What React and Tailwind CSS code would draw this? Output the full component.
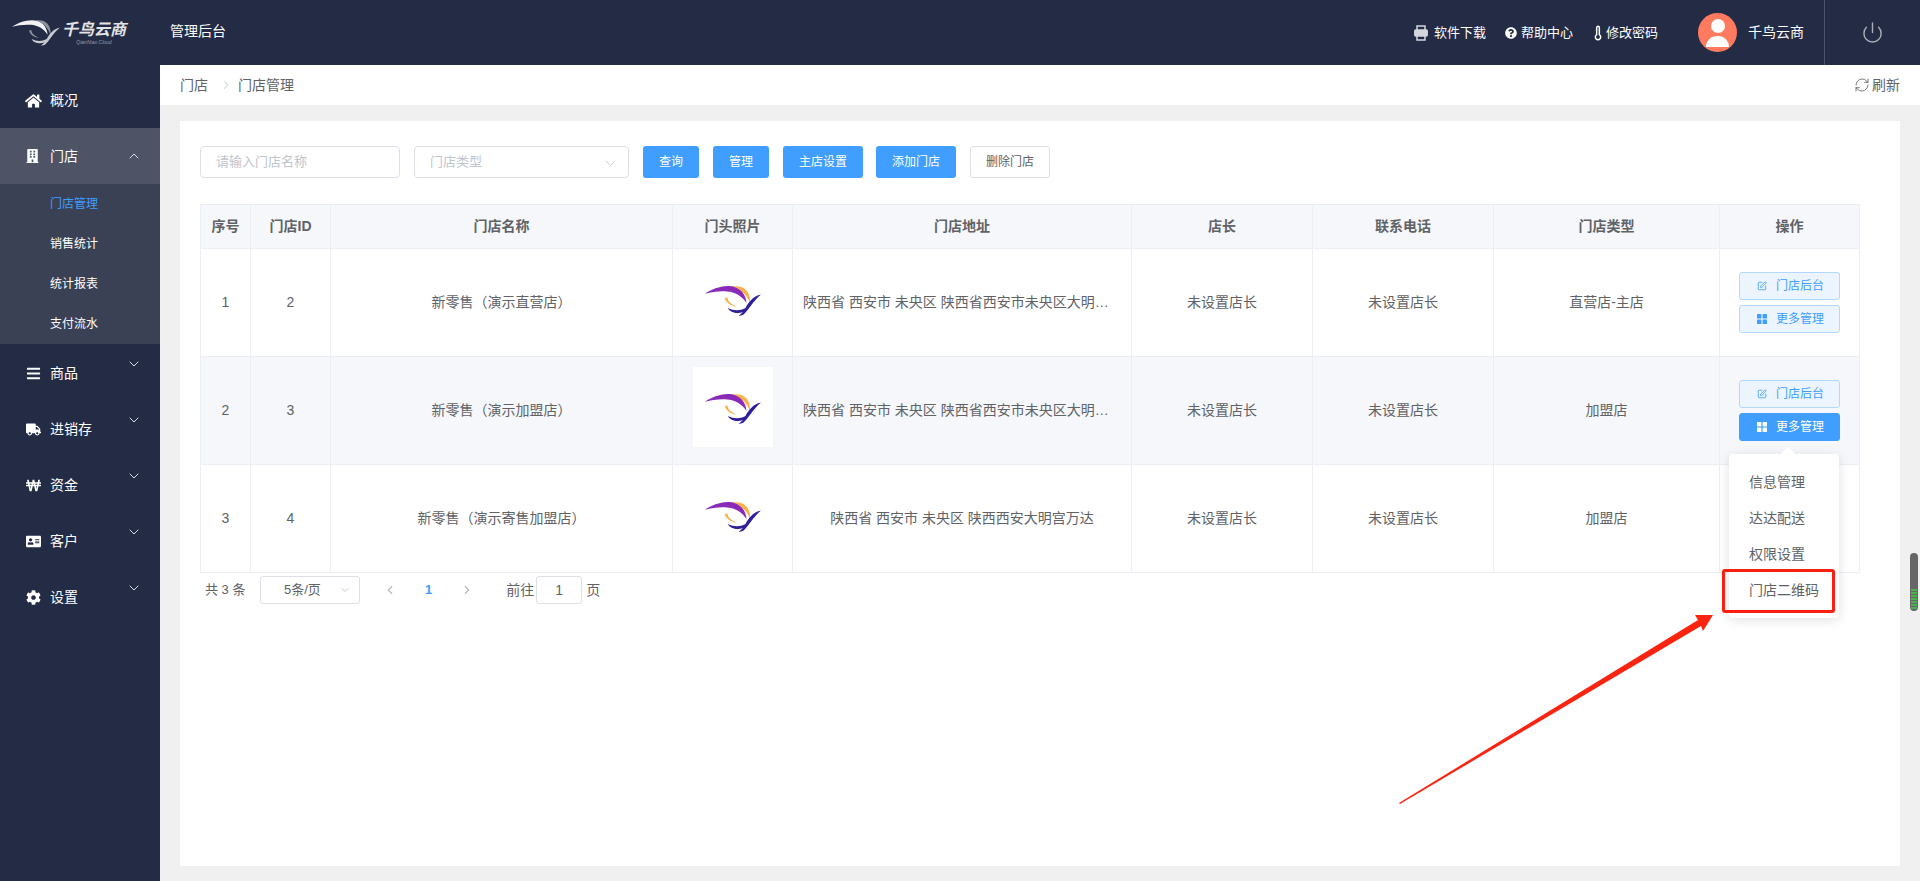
import { ChevronDown, ChevronLeft, ChevronRight, ChevronUp, Power, RefreshCw, SquarePen, Thermometer } from 'lucide-react'
import { FaAddressCard, FaBars, FaBuilding, FaCog, FaHome, FaQuestionCircle, FaTruck, FaWonSign } from 'react-icons/fa'

const menus = [
  { name: '商品', icon: FaBars },
  { name: '进销存', icon: FaTruck },
  { name: '资金', icon: FaWonSign },
  { name: '客户', icon: FaAddressCard },
  { name: '设置', icon: FaCog },
]

const rows = [
  { id: 1, sid: 2, name: '新零售（演示直营店）', addr: '陕西省 西安市 未央区 陕西省西安市未央区大明宫万达广场', type: '直营店-主店' },
  { id: 2, sid: 3, name: '新零售（演示加盟店）', addr: '陕西省 西安市 未央区 陕西省西安市未央区大明宫万达广场', type: '加盟店', active: true },
  { id: 3, sid: 4, name: '新零售（演示寄售加盟店）', addr: '陕西省 西安市 未央区 陕西西安大明宫万达', type: '加盟店' },
]

function BirdLogo({ className, purple, orange, blue }) {
  return (
    <svg viewBox="12 25 56 30" className={className}>
      <path d="M11.500 33 C20 27 33 23 42 26 C49 28 53 35 53.500 42 C49 35 42 31 34 30.500 C26 30 18 31 11.500 33Z" fill={purple} />
      <path d="M40 25.500 C50 23.500 58 30 57 42 C54 34 48 28 40 25.500Z" fill={orange} />
      <path d="M32 37 C32.500 41 37 45 43.500 45.500 C38 43 35 41 34.500 36.500Z" fill={orange} />
      <path d="M68 33.500 C60 35 55 42 52.500 47 C47 50 41 50 35 47 C37 52 45 53 50 51 L45.500 55 L50 54 C55 50 60 40 68 33.500Z" fill={blue} />
    </svg>
  )
}

function GridIcon({ className }) {
  return (
    <svg viewBox="0 0 10 10" className={className} fill="currentColor">
      <rect x="0" y="0" width="4.400" height="4.400" rx="0.500" />
      <rect x="5.600" y="0" width="4.400" height="4.400" rx="0.500" />
      <rect x="0" y="5.600" width="4.400" height="4.400" rx="0.500" />
      <rect x="5.600" y="5.600" width="4.400" height="4.400" rx="0.500" />
    </svg>
  )
}

function AppIcon() {
  return (
    <svg viewBox="0 0 14 16" className="w-[14px] h-[16px]" fill="none" stroke="#d5d7de" strokeWidth="1.500">
      <path d="M3 5V1h8v4M3 11v4h8v-4" />
      <rect x="0.800" y="5" width="12.400" height="6" rx="1" fill="#d5d7de" />
    </svg>
  )
}

function Header() {
  return (
    <div className="h-[65px] shrink-0 bg-[#232b45] flex items-center text-white text-[13px]">
      <div className="w-[170px] flex items-center pl-[12px] gap-[2px]">
        <BirdLogo className="w-[48px] h-[26px]" purple="#f2f2f2" orange="#8d909c" blue="#c9cacf" />
        <div className="flex flex-col items-center text-[#e4e4e6]">
          <span className="text-[16px] leading-[19px] italic font-bold">千鸟云商</span>
          <span className="text-[5px] leading-[6px] italic text-[#9a9ca6]">QianNiao Cloud</span>
        </div>
      </div>
      <span className="mb-[2px] text-[14px]">管理后台</span>
      <div className="ml-auto flex items-center h-full">
        <div className="flex items-center gap-[6px] mr-[19px]">
          <AppIcon />
          <span>软件下载</span>
        </div>
        <div className="flex items-center gap-[4px] mr-[17px]">
          <FaQuestionCircle className="w-[12px] h-[12px]" />
          <span>帮助中心</span>
        </div>
        <div className="flex items-center mr-[40px]">
          <Thermometer className="w-[16px] h-[16px]" strokeWidth={2.250} />
          <span>修改密码</span>
        </div>
        <div className="w-[39px] h-[39px] rounded-full bg-[#ff7a5f] flex flex-col items-center justify-center overflow-hidden">
          <div className="w-[14px] h-[14px] rounded-full bg-white" />
          <div className="w-[23px] h-[11px] mt-[3px] rounded-t-full bg-white" />
        </div>
        <span className="ml-[11px] w-[76px] text-[14px]">千鸟云商</span>
        <div className="w-[96px] h-full border-l border-[#4c5369] flex items-center justify-center">
          <Power className="w-[23px] h-[23px] text-[#a9adb8]" strokeWidth={1.500} />
        </div>
      </div>
    </div>
  )
}

function Sidebar() {
  return (
    <div className="w-[160px] shrink-0 bg-[#232b45] text-white text-[14px]">
      <div className="h-[63px] flex items-center pl-[25px] pt-[8px] gap-[8px]">
        <FaHome className="w-[17px] h-[16px]" />
        <span>概况</span>
      </div>
      <div className="h-[56px] bg-[#4e5366] flex items-center pl-[26px] relative">
        <FaBuilding className="w-[13px] h-[14px]" />
        <span className="ml-[11px]">门店</span>
        <ChevronUp className="absolute left-[126px] top-[20px] w-[16px] h-[16px] text-[#d9dbe0]" strokeWidth={1.500} />
      </div>
      <div className="bg-[#3a4155] text-[12px] pl-[50px]">
        <div className="h-[40px] flex items-center text-[#409eff]">门店管理</div>
        <div className="h-[40px] flex items-center">销售统计</div>
        <div className="h-[40px] flex items-center">统计报表</div>
        <div className="h-[40px] flex items-center">支付流水</div>
      </div>
      {menus.map((m) => (
        <div key={m.name} className="h-[56px] flex items-center pt-[2px] relative">
          <div className="w-[50px] flex justify-center pl-[16px] shrink-0">
            <m.icon className="w-[15px] h-[15px]" />
          </div>
          <span>{m.name}</span>
          <ChevronDown className="absolute left-[126px] top-[12px] w-[16px] h-[16px] text-[#d9dbe0]" strokeWidth={1.500} />
        </div>
      ))}
    </div>
  )
}

function Toolbar() {
  const btn = 'h-[32px] rounded-[3px] bg-[#409eff] text-white text-[12px] flex items-center justify-center'
  return (
    <div className="flex items-center h-[32px] text-[12px]">
      <div className="w-[200px] h-full border border-[#dcdfe6] rounded-[4px] flex items-center pl-[15px] text-[#c0c4cc] text-[13px]">请输入门店名称</div>
      <div className="w-[215px] h-full ml-[14px] border border-[#dcdfe6] rounded-[4px] flex items-center pl-[15px] pr-[9px] text-[#c0c4cc] text-[13px]">
        <span>门店类型</span>
        <ChevronDown className="ml-auto mt-[3px] w-[17px] h-[17px]" strokeWidth={1.250} />
      </div>
      <div className={`${btn} w-[56px] ml-[14px]`}>查询</div>
      <div className={`${btn} w-[56px] ml-[14px]`}>管理</div>
      <div className={`${btn} w-[80px] ml-[14px]`}>主店设置</div>
      <div className={`${btn} w-[80px] ml-[13px]`}>添加门店</div>
      <div className="h-[32px] w-[80px] ml-[14px] rounded-[3px] border border-[#dcdfe6] text-[#606266] flex items-center justify-center">删除门店</div>
    </div>
  )
}

function OpButton({ icon: Icon, label, solid }) {
  return (
    <div className={`h-[28px] w-[101px] mx-auto rounded-[3px] border flex items-center text-[12px] pl-[17px] ${solid ? 'bg-[#409eff] border-[#409eff] text-white' : 'bg-[#ecf5ff] border-[#b3d8ff] text-[#409eff]'}`}>
      <Icon className="w-[10px] h-[10px]" />
      <span className="ml-[9px]">{label}</span>
    </div>
  )
}

function StoreTable() {
  const head = 'border border-[#ebeef5] bg-[#f5f7fa] text-[14px] font-bold text-[#606266] text-center'
  const cell = 'border border-[#ebeef5] text-center px-[10px]'
  return (
    <table className="w-[1659px] table-fixed border-collapse mt-[26px] text-[14px] text-[#606266]">
      <colgroup>
        <col className="w-[50px]" />
        <col className="w-[80px]" />
        <col className="w-[342px]" />
        <col className="w-[120px]" />
        <col className="w-[339px]" />
        <col className="w-[181px]" />
        <col className="w-[181px]" />
        <col className="w-[226px]" />
        <col className="w-[140px]" />
      </colgroup>
      <thead>
        <tr className="h-[44px]">
          {['序号', '门店ID', '门店名称', '门头照片', '门店地址', '店长', '联系电话', '门店类型', '操作'].map((t) => (
            <th key={t} className={head}>{t}</th>
          ))}
        </tr>
      </thead>
      <tbody>
        {rows.map((r) => (
          <tr key={r.id} className={`h-[108px] ${r.active ? 'bg-[#f5f7fa]' : 'bg-white'}`}>
            <td className={cell}>{r.id}</td>
            <td className={cell}>{r.sid}</td>
            <td className={cell}>{r.name}</td>
            <td className={cell}>
              <div className="w-[80px] h-[80px] mx-auto mb-[8px] bg-white flex items-center justify-center">
                <BirdLogo className="w-[56px] h-[30px] mt-[5px]" purple="#8a2bb8" orange="#f7b24a" blue="#2e1f9a" />
              </div>
            </td>
            <td className={cell}><div className="truncate">{r.addr}</div></td>
            <td className={cell}>未设置店长</td>
            <td className={cell}>未设置店长</td>
            <td className={cell}>{r.type}</td>
            <td className={`${cell} px-0`}>
              {r.id !== 3 && (
                <div className="flex flex-col gap-[5px]">
                  <OpButton icon={SquarePen} label="门店后台" />
                  <OpButton icon={GridIcon} label="更多管理" solid={r.active} />
                </div>
              )}
            </td>
          </tr>
        ))}
      </tbody>
    </table>
  )
}

function Pagination() {
  return (
    <div className="flex items-center h-[28px] mt-[3px] text-[13px] text-[#606266]">
      <span className="ml-[5px] w-[55px]">共 3 条</span>
      <div className="w-[100px] h-[28px] border border-[#dcdfe6] rounded-[3px] flex items-center pl-[23px] pr-[8px]">
        <span>5条/页</span>
        <ChevronDown className="ml-auto w-[12px] h-[12px] text-[#c0c4cc]" />
      </div>
      <ChevronLeft className="ml-[23px] w-[14px] h-[14px] text-[#b4b8c0]" />
      <span className="ml-[28px] font-bold text-[#409eff]">1</span>
      <ChevronRight className="ml-[28px] w-[14px] h-[14px] text-[#b4b8c0]" />
      <span className="ml-[32px] text-[14px]">前往</span>
      <div className="w-[46px] h-[28px] ml-[2px] border border-[#dcdfe6] rounded-[3px] flex items-center justify-center text-[14px]">1</div>
      <span className="ml-[4px] text-[14px]">页</span>
    </div>
  )
}

function Dropdown() {
  return (
    <div className="absolute left-[1729px] top-[454px] w-[110px] h-[164px] bg-white rounded-[4px] shadow-[0_2px_12px_rgba(0,0,0,0.12)] pt-[10px] text-[13px] text-[#606266]">
      <div className="absolute -top-[5px] left-[54px] w-[10px] h-[10px] bg-white rotate-45" />
      {['信息管理', '达达配送', '权限设置', '门店二维码'].map((t) => (
        <div key={t} className="relative h-[36px] flex items-center pl-[20px] text-[14px]">{t}</div>
      ))}
    </div>
  )
}

export default function App() {
  return (
    <div className="relative w-[1920px] h-screen overflow-hidden flex flex-col [font-family:'Liberation_Sans','Noto_Sans_CJK_SC',sans-serif]">
      <Header />
      <div className="flex flex-1 min-h-0">
        <Sidebar />
        <div className="flex-1 flex flex-col bg-[#f0f0f0] min-w-0">
          <div className="h-[40px] shrink-0 bg-white flex items-center pl-[20px] pr-[20px] text-[14px] text-[#606266]">
            <span>门店</span>
            <ChevronRight className="ml-[11px] mr-[5px] w-[14px] h-[14px] text-[#c0c4cc]" strokeWidth={1.500} />
            <span>门店管理</span>
            <div className="ml-auto flex items-center gap-[2px]">
              <RefreshCw className="w-[16px] h-[16px]" strokeWidth={1.250} />
              <span>刷新</span>
            </div>
          </div>
          <div className="flex-1 bg-white mt-[16px] mx-[20px] mb-[15px] px-[20px] pt-[25px]">
            <Toolbar />
            <StoreTable />
            <Pagination />
          </div>
        </div>
      </div>

      <Dropdown />

      {/* annotation drawn over the screenshot */}
      <div className="absolute left-[1722px] top-[569px] w-[113px] h-[44px] border-[3px] border-[#fb1f10] rounded-[3px]" />
      <svg className="absolute left-0 top-0 w-[1920px] h-[881px] pointer-events-none" viewBox="0 0 1920 881">
        <path d="M1399 803 L1400 804 L1701 626 L1703 631 L1713 615 L1695 615 L1698 620 Z" fill="#fb2410" />
      </svg>

      {/* floating scroll widget on the window edge */}
      <div className="absolute left-[1910px] top-[553px] w-[8px] h-[58px] rounded-full bg-[#666666] overflow-hidden flex flex-col justify-end gap-[1px] pb-[2px] px-[1px]">
        {[...Array(7)].map((_, i) => (
          <div key={i} className="h-[2px] bg-[#4caf50]" />
        ))}
      </div>
    </div>
  )
}
